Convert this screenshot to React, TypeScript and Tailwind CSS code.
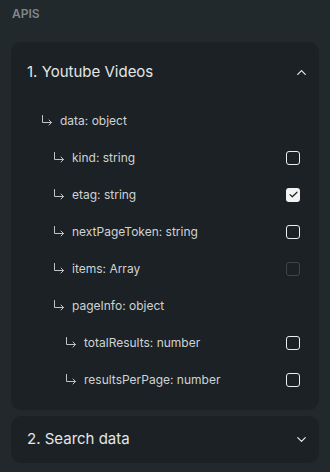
import { ChevronUp, ChevronDown } from 'lucide-react'

type Field = { label: string; depth: number; check?: 'off' | 'on' | 'disabled' }

const fields: Field[] = [
  { label: 'data: object', depth: 0 },
  { label: 'kind: string', depth: 1, check: 'off' },
  { label: 'etag: string', depth: 1, check: 'on' },
  { label: 'nextPageToken: string', depth: 1, check: 'off' },
  { label: 'items: Array', depth: 1, check: 'disabled' },
  { label: 'pageInfo: object', depth: 1 },
  { label: 'totalResults: number', depth: 2, check: 'off' },
  { label: 'resultsPerPage: number', depth: 2, check: 'off' },
]

const indentCls = ['pl-[30px]', 'pl-[42px]', 'pl-[54px]']

function ChildArrow() {
  return (
    <svg width="12" height="11" viewBox="0 0 12 11" fill="none" className="shrink-0 text-[#bfc4c6]">
      <path d="M1.5 0.5V7.5H10.5M8 5L10.5 7.5L8 10" stroke="currentColor" strokeWidth="1" strokeLinecap="round" strokeLinejoin="round" />
    </svg>
  )
}

function Checkbox({ state }: { state: 'off' | 'on' | 'disabled' }) {
  if (state === 'on') {
    return (
      <span className="flex size-[14px] items-center justify-center rounded-[3px] bg-[#f2f3f3]">
        <svg width="9" height="7" viewBox="0 0 9 7" fill="none">
          <path d="M1 3.6L3.3 5.8L8 1.2" stroke="#1b2023" strokeWidth="1.2" strokeLinecap="round" strokeLinejoin="round" />
        </svg>
      </span>
    )
  }
  return (
    <span
      className={
        state === 'disabled'
          ? 'size-[14px] rounded-[3px] border-[1.5px] border-[#3e4447]'
          : 'size-[14px] rounded-[3px] border-[1.5px] border-[#eceeee]'
      }
    />
  )
}

export default function App() {
  return (
    <div className="h-[472px] w-[330px] bg-[#22292c] px-[11px] pt-[6px] font-['Inter',sans-serif]">
      <div className="h-[16px] pl-px text-[12px] font-semibold leading-[16px] text-[#7f878b]">APIS</div>

      <div className="mt-[20px] rounded-[10px] bg-[#1b2124] pb-[12px]">
        <div className="flex h-[60px] items-center justify-between pl-4 pr-[10px]">
          <span className="text-[15px] text-[#e4e6e7]">1. Youtube Videos</span>
          <ChevronUp size={15} strokeWidth={2} className="text-[#e4e6e7]" />
        </div>

        {fields.map(f => (
          <div key={f.label} className={`flex h-[37px] items-center justify-between pr-[19px] ${indentCls[f.depth]}`}>
            <span className="flex items-center gap-[7px] text-[12px] text-[#cfd3d5]">
              <ChildArrow />
              {f.label}
            </span>
            {f.check && <Checkbox state={f.check} />}
          </div>
        ))}
      </div>

      <div className="mt-[6px] flex h-[47px] items-center justify-between rounded-[10px] bg-[#1b2124] pl-4 pr-[10px]">
        <span className="text-[15px] text-[#e4e6e7]">2. Search data</span>
        <ChevronDown size={15} strokeWidth={2} className="text-[#e4e6e7]" />
      </div>
    </div>
  )
}
